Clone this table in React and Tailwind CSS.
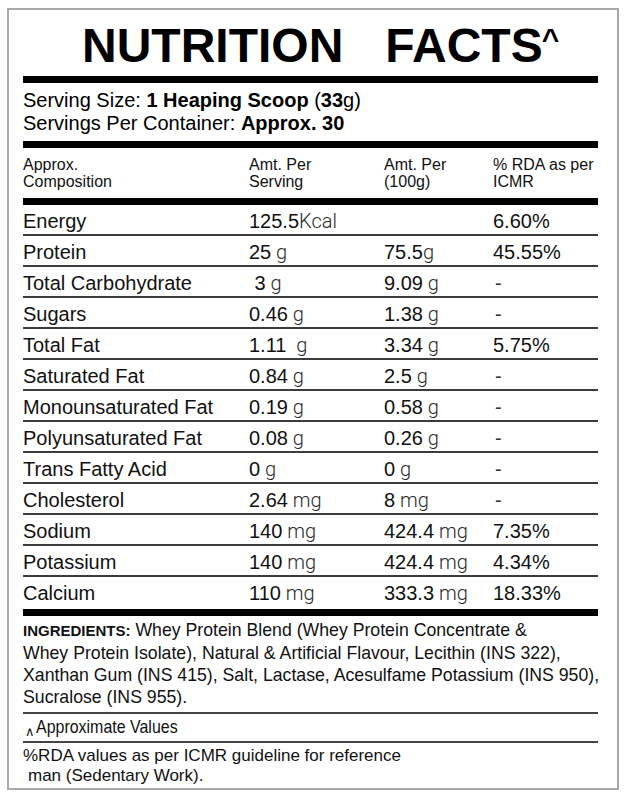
import React from "react";

const rows = [
  ["Energy", ["125.5", "Kcal"], null, "6.60%"],
  ["Protein", ["25", " g"], ["75.5", "g"], "45.55%"],
  ["Total Carbohydrate", [" 3", " g"], ["9.09", " g"], "-"],
  ["Sugars", ["0.46", " g"], ["1.38", " g"], "-"],
  ["Total Fat", ["1.11", "  g"], ["3.34", " g"], "5.75%"],
  ["Saturated Fat", ["0.84", " g"], ["2.5", " g"], "-"],
  ["Monounsaturated Fat", ["0.19", " g"], ["0.58", " g"], "-"],
  ["Polyunsaturated Fat", ["0.08", " g"], ["0.26", " g"], "-"],
  ["Trans Fatty Acid", ["0", " g"], ["0", " g"], "-"],
  ["Cholesterol", ["2.64", " mg"], ["8", " mg"], "-"],
  ["Sodium", ["140", " mg"], ["424.4", " mg"], "7.35%"],
  ["Potassium", ["140", " mg"], ["424.4", " mg"], "4.34%"],
  ["Calcium", ["110", " mg"], ["333.3", " mg"], "18.33%"],
];

function Val({ v }) {
  if (!v) return <span />;
  return (
    <span className="whitespace-pre">
      <span>{v[0]}</span>
      <span className="font-['Roboto',Arial,sans-serif] font-light text-[#2a2a2a]">{v[1]}</span>
    </span>
  );
}

function Bar() {
  return <div className="h-[7px] w-full bg-black" />;
}

export default function App() {
  return (
    <div className="w-[626px] h-[800px] bg-white pt-[8px] pl-[7px] font-['Liberation_Sans',Arial,sans-serif] text-[#111]">
      <div className="w-[612px] h-[782px] border-2 border-[#a9a9a9] pl-[14px] pr-[19px] flex flex-col">
        {/* Title */}
        <div className="pt-[12px] h-[60px] flex pl-[59px] text-[48px] leading-[48px] font-bold text-black whitespace-pre">
          <span>NUTRITION</span>
          <span className="ml-[42px]">
            FACTS
            <span className="relative -top-[13px] text-[30px] -ml-[1px]">^</span>
          </span>
        </div>
        <div className="mt-[6px]">
          <Bar />
        </div>

        {/* Serving */}
        <div className="h-[58px] pt-[6px] text-[20px] leading-[23px] text-black">
          <div>
            Serving Size: <span className="font-bold">1 Heaping Scoop</span> (<span className="font-bold">33</span>g)
          </div>
          <div>
            Servings Per Container: <span className="font-bold">Approx. 30</span>
          </div>
        </div>
        <Bar />

        {/* Header */}
        <div className="h-[50px] pt-[8px] grid grid-cols-[226px_135px_109px_1fr] text-[16px] leading-[17px] text-[#111]">
          <div>Approx.<br />Composition</div>
          <div>Amt. Per<br />Serving</div>
          <div>Amt. Per<br />(100g)</div>
          <div>% RDA as per<br />ICMR</div>
        </div>
        <Bar />

        {/* Rows */}
        {rows.map((r, i) => {
          const last = i === rows.length - 1;
          return (
            <div
              key={r[0]}
              className={
                "grid grid-cols-[226px_135px_109px_1fr] pt-[4px] text-[20px] leading-[25px] " +
                (last ? "h-[32px]" : "h-[31px] border-b-2 border-[#3c3c3c]")
              }
            >
              <div className="whitespace-nowrap">{r[0]}</div>
              <Val v={r[1]} />
              <Val v={r[2]} />
              <div className={r[3] === "-" ? "pl-[2px] text-[#333]" : ""}>{r[3]}</div>
            </div>
          );
        })}
        <Bar />

        {/* Ingredients */}
        <div className="pt-[3px] pb-[4px] text-[17.7px] leading-[22px] border-b-2 border-[#444] whitespace-nowrap">
          <div>
            <span className="font-bold text-[15px]">INGREDIENTS:</span> Whey Protein Blend (Whey Protein Concentrate &amp;
          </div>
          <div>Whey Protein Isolate), Natural &amp; Artificial Flavour, Lecithin (INS 322),</div>
          <div>Xanthan Gum (INS 415), Salt, Lactase, Acesulfame Potassium (INS 950),</div>
          <div>Sucralose (INS 955).</div>
        </div>

        <div className="h-[29px] pt-[2px] border-b-2 border-[#444] text-[19px] leading-[21px] whitespace-nowrap flex">
          <span className="relative top-[5px] text-[13px] leading-[21px] mr-[1px] ml-[2px]">∧</span>
          <span className="inline-block origin-left scale-x-[0.84]">Approximate Values</span>
        </div>

        <div className="pt-[3px] text-[17px] leading-[19.5px] whitespace-nowrap">
          <div>%RDA values as per ICMR guideline for reference</div>
          <div className="pl-[5px]">man (Sedentary Work).</div>
        </div>
      </div>
    </div>
  );
}
